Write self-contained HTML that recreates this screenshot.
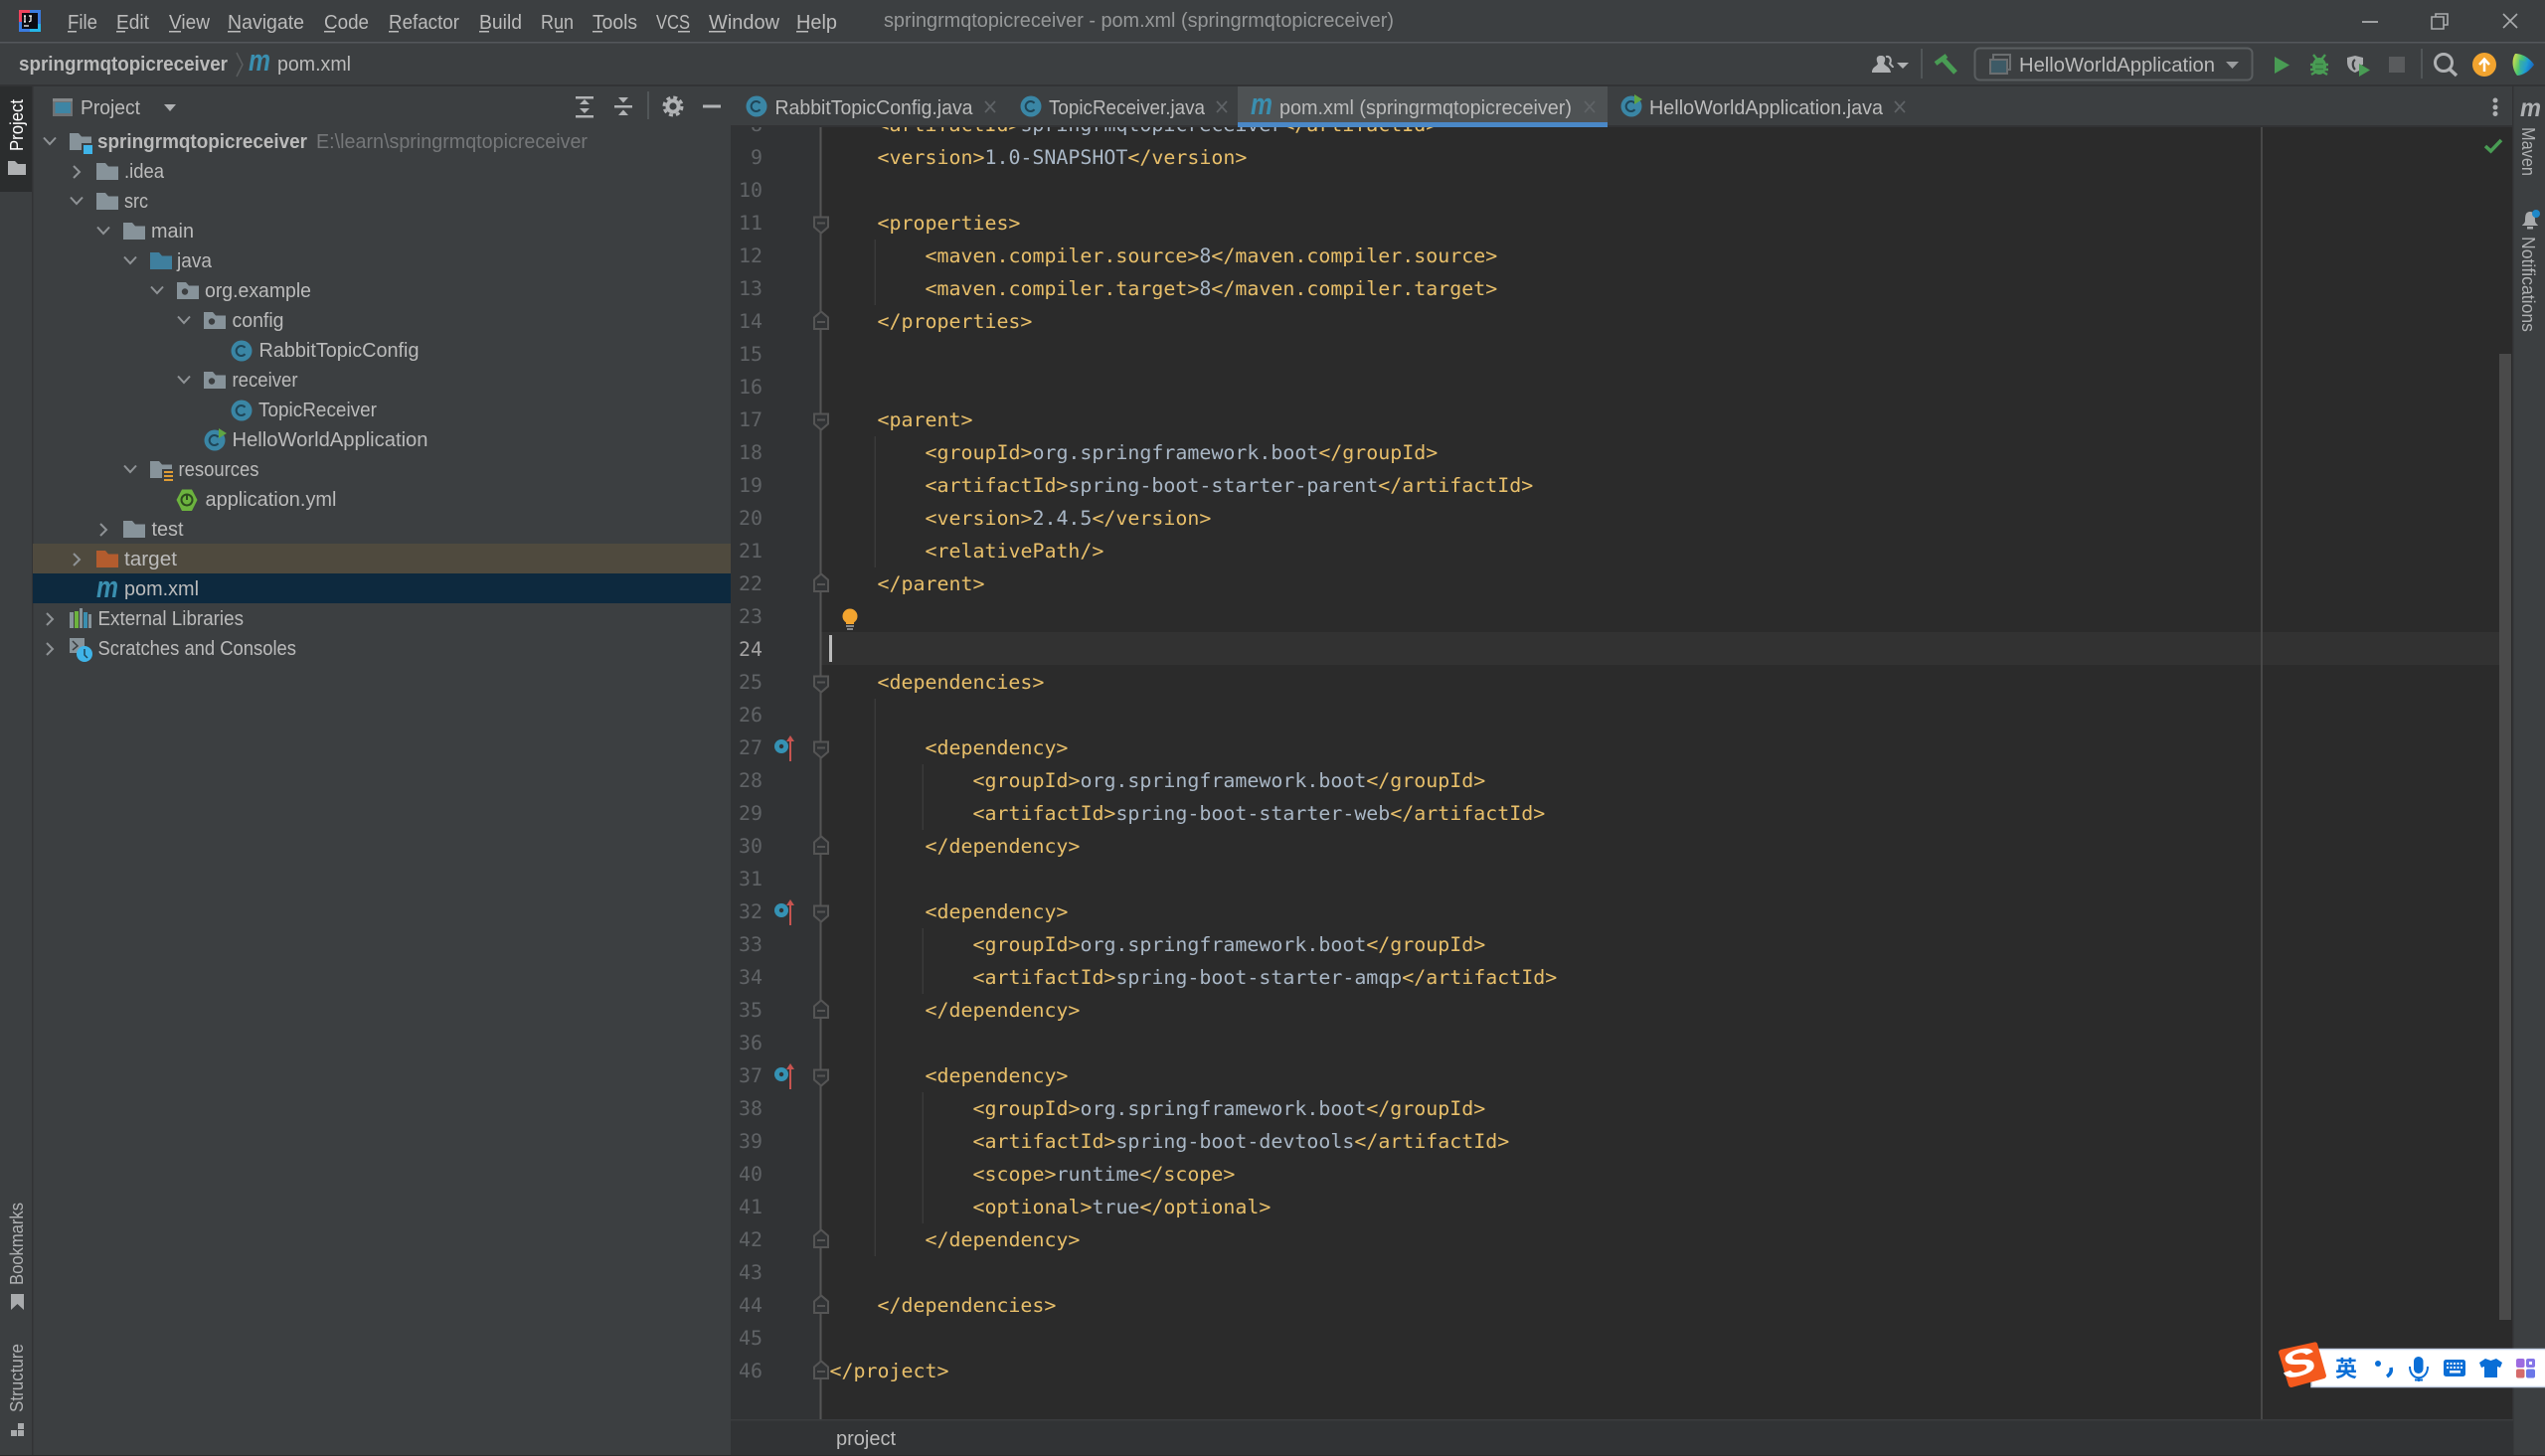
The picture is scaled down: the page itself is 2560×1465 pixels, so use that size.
<!DOCTYPE html>
<html><head><meta charset="utf-8"><title>pom.xml</title>
<style>
html,body{margin:0;padding:0;background:#3c3f41;overflow:hidden}
svg{display:block}
text{font-family:"Liberation Sans",sans-serif;font-size:20px;fill:#bbb}
.m{font-family:"DejaVu Sans Mono","Liberation Mono",monospace;font-size:19.93px;fill:#e8bf6a;white-space:pre}
.m tspan{fill:#a9b7c6}
.n{font-family:"DejaVu Sans Mono","Liberation Mono",monospace;font-size:19.93px;fill:#606366;text-anchor:end}
.ic{font-weight:bold;font-style:italic;font-size:31px;fill:#3a8fb0}
.x{stroke:#5f6366;stroke-width:1.8;fill:none}
.ch{stroke:#8f9396;stroke-width:2;fill:none}
</style></head>
<body>
<svg xmlns="http://www.w3.org/2000/svg" width="2560" height="1465" viewBox="0 0 2560 1465">
<defs>
<linearGradient id="tb" x1="0" y1="0" x2="1" y2="0.300"><stop offset="0" stop-color="#e9e24a"/><stop offset="0.450" stop-color="#4cc66f"/><stop offset="0.750" stop-color="#1d9ad6"/><stop offset="1" stop-color="#1a6fc4"/></linearGradient>
<symbol id="fold" viewBox="0 0 22 17" width="22" height="17" overflow="visible"><path d="M0 0H9L12 3.5H22V17H0Z" fill="#87939a"/></symbol>
<symbol id="jfold" viewBox="0 0 22 17" width="22" height="17" overflow="visible"><path d="M0 0H9L12 3.5H22V17H0Z" fill="#3f7f9e"/></symbol>
<symbol id="tfold" viewBox="0 0 22 17" width="22" height="17" overflow="visible"><path d="M0 0H9L12 3.5H22V17H0Z" fill="#b35c2e"/></symbol>
<symbol id="pfold" viewBox="0 0 22 17" width="22" height="17" overflow="visible"><path d="M0 0H9L12 3.5H22V17H0Z" fill="#87939a"/><circle cx="8" cy="9.5" r="3.2" fill="#3c3f41"/></symbol>
<symbol id="cls" viewBox="-11 -11 22 22" width="22" height="22" overflow="visible"><circle r="10.5" fill="#3a86a5"/><path d="M3.5 -3.2A5 5 0 1 0 3.5 3.2" fill="none" stroke="#1f4557" stroke-width="2"/></symbol>
<g id="fo"><path d="M-7 -6H7V4L0 10L-7 4Z" fill="#313335" stroke="#555" stroke-width="2"/><path d="M-4 0H4" stroke="#555" stroke-width="2"/></g>
<g id="fc"><path d="M-7 7.500H7V-4L0 -10L-7 -4Z" fill="#313335" stroke="#555" stroke-width="2"/><path d="M-4 0.500H4" stroke="#555" stroke-width="2"/></g>
<g id="mv"><circle cx="786" cy="0" r="7" fill="#3592b4"/><circle cx="786" cy="0" r="2.200" fill="#313335"/><path d="M795 -6V15" stroke="#c75450" stroke-width="2"/><path d="M791 -5L795 -11L799 -5Z" fill="#c75450"/></g>
</defs>

<rect width="2560" height="1465" fill="#3c3f41"/>
<!-- title bar -->
<rect y="42" width="2560" height="1.500" fill="#54575a"/>
<rect x="0" y="85" width="2560" height="2" fill="#323335"/>
<rect x="19" y="10" width="22" height="22" fill="#3a7be0"/>
<rect x="19" y="10" width="11" height="12" fill="#f0435c"/>
<rect x="30" y="24" width="11" height="8" fill="#25b6e8"/>
<rect x="22" y="13" width="16" height="16" fill="#0b0b12"/>
<path d="M24 16H26M25 16V22M24 22H26M29 16H32M31 16V21L29 22M24 26H29" stroke="#fff" stroke-width="1.200" fill="none"/>

<text x="68" y="29" textLength="30" lengthAdjust="spacingAndGlyphs">File</text>
<text x="117" y="29" textLength="33" lengthAdjust="spacingAndGlyphs">Edit</text>
<text x="170" y="29" textLength="41" lengthAdjust="spacingAndGlyphs">View</text>
<text x="229" y="29" textLength="77" lengthAdjust="spacingAndGlyphs">Navigate</text>
<text x="326" y="29" textLength="45" lengthAdjust="spacingAndGlyphs">Code</text>
<text x="391" y="29" textLength="71" lengthAdjust="spacingAndGlyphs">Refactor</text>
<text x="482" y="29" textLength="43" lengthAdjust="spacingAndGlyphs">Build</text>
<text x="544" y="29" textLength="33" lengthAdjust="spacingAndGlyphs">Run</text>
<text x="596" y="29" textLength="45" lengthAdjust="spacingAndGlyphs">Tools</text>
<text x="660" y="29" textLength="34" lengthAdjust="spacingAndGlyphs">VCS</text>
<text x="713" y="29" textLength="71" lengthAdjust="spacingAndGlyphs">Window</text>
<text x="801" y="29" textLength="41" lengthAdjust="spacingAndGlyphs">Help</text>
<g fill="#bbb"><rect x="68" y="31" width="9" height="1.500"/><rect x="117" y="31" width="9" height="1.500"/><rect x="170" y="31" width="12" height="1.500"/><rect x="229" y="31" width="13" height="1.500"/><rect x="326" y="31" width="11" height="1.500"/><rect x="391" y="31" width="10" height="1.500"/><rect x="482" y="31" width="10" height="1.500"/><rect x="559" y="31" width="8" height="1.500"/><rect x="596" y="31" width="10" height="1.500"/><rect x="682" y="31" width="12" height="1.500"/><rect x="713" y="31" width="17" height="1.500"/><rect x="801" y="31" width="12" height="1.500"/></g>

<text x="889" y="27" textLength="513" lengthAdjust="spacingAndGlyphs" style="fill:#969899">springrmqtopicreceiver - pom.xml (springrmqtopicreceiver)</text>
<path d="M2376 22H2392" stroke="#a9abad" stroke-width="1.800"/>
<path d="M2446 17H2458V29H2446ZM2450 17V14H2462V25H2458" fill="none" stroke="#a9abad" stroke-width="1.600"/>
<path d="M2518 14L2532 28M2532 14L2518 28" stroke="#a9abad" stroke-width="1.600"/>

<!-- nav bar -->
<text x="19" y="71" textLength="210" lengthAdjust="spacingAndGlyphs" style="font-weight:bold">springrmqtopicreceiver</text>
<path d="M238 53L244 65L238 77" fill="none" stroke="#5b5e60" stroke-width="1.500"/>
<text class="ic" x="250" y="71" textLength="22" lengthAdjust="spacingAndGlyphs">m</text>
<text x="279" y="71" textLength="74" lengthAdjust="spacingAndGlyphs">pom.xml</text>

<!-- toolbar icons -->
<path d="M1883 73C1883 67 1888 67 1889 64C1887 60 1887 56 1892 56C1897 56 1897 60 1895 64C1897 67 1901 67 1902 73Z" fill="#afb1b3"/>
<path d="M1897 57C1901 56 1903 60 1901 64C1902 66 1904 66 1904 68" fill="none" stroke="#afb1b3" stroke-width="2"/>
<path d="M1908 63H1920L1914 69Z" fill="#afb1b3"/>
<rect x="1932" y="49" width="2" height="30" fill="#515658"/>
<path d="M1947 64L1958 56" stroke="#499c54" stroke-width="4.500" fill="none"/>
<path d="M1954 59L1967 73" stroke="#499c54" stroke-width="5" fill="none"/>
<rect x="1986.500" y="48.500" width="279" height="32" rx="5" fill="#3c3f41" stroke="#5a5e60" stroke-width="2"/>
<path d="M2005 59V55H2022V70H2019" fill="none" stroke="#6b6e70" stroke-width="2"/>
<rect x="2002" y="60" width="17" height="14" fill="#3d5a66" stroke="#6b6e70" stroke-width="2"/>
<text x="2031" y="72" textLength="197" lengthAdjust="spacingAndGlyphs">HelloWorldApplication</text>
<path d="M2239 62H2252L2245.500 69Z" fill="#9a9c9e"/>
<path d="M2288 57L2303 65.500L2288 74Z" fill="#499c54"/>
<path d="M2327 55L2331 60M2339 55L2335 60M2324 65H2342M2324 70H2342M2325 75L2330 72M2341 75L2336 72" stroke="#499c54" stroke-width="2.400" fill="none"/>
<ellipse cx="2333" cy="66.500" rx="7" ry="8.500" fill="#499c54"/>
<path d="M2329 64.500H2337M2329 69.500H2337" stroke="#3a7a44" stroke-width="1.500"/>
<path d="M2361 58L2369 56L2377 58V65L2373 66V71L2369 73C2364 71 2361 68 2361 62Z" fill="#a9abad"/>
<path d="M2369 60C2366 62 2366 67 2369 70" fill="none" stroke="#3c3f41" stroke-width="2.200"/>
<path d="M2373 64L2384 70.500L2373 77Z" fill="#499c54"/>
<rect x="2403" y="57" width="16" height="16" fill="#595b5d"/>
<rect x="2435" y="49" width="2" height="30" fill="#515658"/>
<circle cx="2458" cy="63" r="8.500" fill="none" stroke="#afb1b3" stroke-width="3"/>
<path d="M2464 69.500L2471 76" stroke="#afb1b3" stroke-width="3.500"/>
<circle cx="2499" cy="65" r="12" fill="#f2a42f"/>
<path d="M2499 72V60M2494 65L2499 59.500L2504 65" fill="none" stroke="#fff" stroke-width="2.500"/>
<path d="M2530 54C2538 54 2545 59 2549 65C2545 71 2538 76 2532 76C2527 70 2526 60 2530 54Z" fill="url(#tb)"/>
<path d="M2534 60C2539 61 2542 63 2543 65C2541 68 2538 70 2535 71Z" fill="#2a9fd0" opacity=".55"/>

<!-- left stripe -->
<rect x="32" y="87" width="1.500" height="1378" fill="#323335"/>
<rect x="0" y="87" width="32" height="106" fill="#2b2d2e"/>
<text transform="translate(23,152) rotate(-90)" textLength="52" lengthAdjust="spacingAndGlyphs" style="font-size:18px;fill:#fff">Project</text>
<path d="M8 162H15L18 165H26V176H8Z" fill="#afb1b3"/>
<text transform="translate(23,1293) rotate(-90)" textLength="83" lengthAdjust="spacingAndGlyphs" style="font-size:18px;fill:#afb1b3">Bookmarks</text>
<path d="M11 1302H24V1318L17.500 1312L11 1318Z" fill="#a9abad"/>
<text transform="translate(23,1421) rotate(-90)" textLength="69" lengthAdjust="spacingAndGlyphs" style="font-size:18px;fill:#afb1b3">Structure</text>
<path d="M18 1432H24V1438H18ZM11 1439H17V1445H11ZM18 1439H24V1445H18Z" fill="#a9abad"/>

<!-- project panel header -->
<rect x="53" y="99" width="20" height="18" fill="#6e7275"/>
<rect x="53" y="99" width="20" height="3" fill="#85888a"/>
<rect x="55.500" y="103" width="15.500" height="11" fill="#3e85a4"/>
<text x="81" y="115" textLength="60" lengthAdjust="spacingAndGlyphs">Project</text>
<path d="M165 105H177L171 112Z" fill="#afb1b3"/>
<g fill="#b1b3b5"><rect x="579" y="97" width="18" height="2.500"/><rect x="579" y="116" width="18" height="2.500"/><path d="M583 105L588 100L593 105ZM583 109H593L588 114Z"/>
<rect x="618" y="106" width="18" height="2.500"/><path d="M622 98H632L627 103.500ZM622 116H632L627 110.500Z"/>
<circle cx="677" cy="107" r="7.500"/><circle cx="677" cy="107" r="9" fill="none" stroke="#b1b3b5" stroke-width="3" stroke-dasharray="4 3.070"/>
<rect x="707" y="105.500" width="18" height="3"/></g>
<circle cx="677" cy="107" r="3.600" fill="#3c3f41"/>
<rect x="651" y="92" width="2" height="28" fill="#515658"/>

<!-- tree highlights -->
<rect x="33" y="547" width="702" height="30" fill="#4f4a3e"/>
<rect x="33" y="577" width="702" height="30" fill="#0d293e"/>

<!-- chevrons -->
<path class="ch" d="M44 138.500L50 145L56 138.500"/>
<path class="ch" d="M74 167L80 173L74 179"/>
<path class="ch" d="M71 198.500L77 205L83 198.500"/>
<path class="ch" d="M98 228.500L104 235L110 228.500"/>
<path class="ch" d="M125 258.500L131 265L137 258.500"/>
<path class="ch" d="M152 288.500L158 295L164 288.500"/>
<path class="ch" d="M179 318.500L185 325L191 318.500"/>
<path class="ch" d="M179 378.500L185 385L191 378.500"/>
<path class="ch" d="M125 468.500L131 475L137 468.500"/>
<path class="ch" d="M101 527L107 533L101 539"/>
<path class="ch" d="M74 557L80 563L74 569"/>
<path class="ch" d="M47 617L53 623L47 629"/>
<path class="ch" d="M47 647L53 653L47 659"/>

<!-- tree icons -->
<use href="#fold" x="70" y="134"/><rect x="82" y="144" width="12" height="12" fill="#3c3f41"/><rect x="84" y="146" width="9" height="9" fill="#3fb4e8"/>
<use href="#fold" x="97" y="164"/>
<use href="#fold" x="97" y="194"/>
<use href="#fold" x="124" y="224"/>
<use href="#jfold" x="151" y="254"/>
<use href="#pfold" x="178" y="284"/>
<use href="#pfold" x="205" y="314"/>
<use href="#cls" x="232" y="342"/>
<use href="#pfold" x="205" y="374"/>
<use href="#cls" x="232" y="402"/>
<use href="#cls" x="205" y="432"/><path d="M220 431L228 436L220 441Z" fill="#5fa544"/>
<use href="#fold" x="151" y="464"/><rect x="163" y="472" width="12" height="15" fill="#3c3f41"/><path d="M165 475H174M165 479H174M165 483H174" stroke="#e09d35" stroke-width="2"/>
<path d="M183 492.500H193L198.500 503L193 514H183L177.500 503Z" fill="#6cb33e"/>
<circle cx="188" cy="503" r="5.500" fill="none" stroke="#2d4a1f" stroke-width="2"/><path d="M188 497V503" stroke="#2d4a1f" stroke-width="2"/>
<use href="#fold" x="124" y="524"/>
<use href="#tfold" x="97" y="554"/>
<text class="ic" x="97" y="601" textLength="22" lengthAdjust="spacingAndGlyphs">m</text>
<g><rect x="70" y="616" width="4" height="16" fill="#87939a"/><rect x="75" y="615" width="4" height="17" fill="#6db33f"/><rect x="80" y="612" width="3" height="20" fill="#87939a"/><rect x="84" y="616" width="4" height="16" fill="#3a8fb0"/><rect x="89" y="618" width="3" height="14" fill="#87939a"/></g>
<rect x="70" y="642" width="15" height="15" fill="#87939a"/><path d="M73 645L78 650L73 654" fill="none" stroke="#3c3f41" stroke-width="1.500"/>
<circle cx="85" cy="658" r="8" fill="#3fb4e8"/><path d="M85 653V659L88 662" fill="none" stroke="#1f4557" stroke-width="1.500"/>

<!-- tree text -->
<text x="98" y="149" textLength="211" lengthAdjust="spacingAndGlyphs" style="font-weight:bold">springrmqtopicreceiver</text>
<text x="318" y="149" textLength="273" lengthAdjust="spacingAndGlyphs" style="fill:#757779">E:\learn\springrmqtopicreceiver</text>
<text x="125" y="179" textLength="40" lengthAdjust="spacingAndGlyphs">.idea</text>
<text x="125" y="209" textLength="24" lengthAdjust="spacingAndGlyphs">src</text>
<text x="152" y="239" textLength="43" lengthAdjust="spacingAndGlyphs">main</text>
<text x="178" y="269" textLength="35" lengthAdjust="spacingAndGlyphs">java</text>
<text x="206" y="299" textLength="107" lengthAdjust="spacingAndGlyphs">org.example</text>
<text x="233.500" y="329" textLength="52" lengthAdjust="spacingAndGlyphs">config</text>
<text x="260.500" y="359" textLength="161" lengthAdjust="spacingAndGlyphs">RabbitTopicConfig</text>
<text x="233.500" y="389" textLength="66" lengthAdjust="spacingAndGlyphs">receiver</text>
<text x="260" y="419" textLength="119" lengthAdjust="spacingAndGlyphs">TopicReceiver</text>
<text x="233.500" y="449" textLength="197" lengthAdjust="spacingAndGlyphs">HelloWorldApplication</text>
<text x="179.500" y="479" textLength="81" lengthAdjust="spacingAndGlyphs">resources</text>
<text x="206.500" y="509" textLength="132" lengthAdjust="spacingAndGlyphs">application.yml</text>
<text x="152.500" y="539" textLength="32" lengthAdjust="spacingAndGlyphs">test</text>
<text x="125" y="569" textLength="53" lengthAdjust="spacingAndGlyphs">target</text>
<text x="125" y="599" textLength="75" lengthAdjust="spacingAndGlyphs">pom.xml</text>
<text x="98.500" y="629" textLength="146.500" lengthAdjust="spacingAndGlyphs">External Libraries</text>
<text x="98.500" y="659" textLength="199.500" lengthAdjust="spacingAndGlyphs">Scratches and Consoles</text>

<!-- editor -->
<rect x="735" y="87" width="1793" height="1378" fill="#2b2b2b"/>
<rect x="735" y="87" width="91" height="1341" fill="#313335"/>
<rect x="826" y="636" width="1688" height="33" fill="#323232"/>
<rect x="2274" y="128" width="2" height="1300" fill="#484848"/>
<g fill="#3a3a3a"><rect x="879.500" y="241" width="1.500" height="66"/><rect x="879.500" y="439" width="1.500" height="132"/><rect x="879.500" y="703" width="1.500" height="561"/><rect x="927.500" y="769" width="1.500" height="66"/><rect x="927.500" y="934" width="1.500" height="66"/><rect x="927.500" y="1099" width="1.500" height="132"/></g>
<rect x="824.500" y="128" width="2" height="1300" fill="#555"/>
<rect x="2514" y="356" width="12" height="972" fill="#4a4a4a"/>

<g>
<text class="n" x="767" y="132">8</text><text class="n" x="767" y="165">9</text><text class="n" x="767" y="198">10</text><text class="n" x="767" y="231">11</text><text class="n" x="767" y="264">12</text><text class="n" x="767" y="297">13</text><text class="n" x="767" y="330">14</text><text class="n" x="767" y="363">15</text><text class="n" x="767" y="396">16</text><text class="n" x="767" y="429">17</text><text class="n" x="767" y="462">18</text><text class="n" x="767" y="495">19</text><text class="n" x="767" y="528">20</text><text class="n" x="767" y="561">21</text><text class="n" x="767" y="594">22</text><text class="n" x="767" y="627">23</text><text class="n" x="767" y="660" style="fill:#a4a3a3">24</text><text class="n" x="767" y="693">25</text><text class="n" x="767" y="726">26</text><text class="n" x="767" y="759">27</text><text class="n" x="767" y="792">28</text><text class="n" x="767" y="825">29</text><text class="n" x="767" y="858">30</text><text class="n" x="767" y="891">31</text><text class="n" x="767" y="924">32</text><text class="n" x="767" y="957">33</text><text class="n" x="767" y="990">34</text><text class="n" x="767" y="1023">35</text><text class="n" x="767" y="1056">36</text><text class="n" x="767" y="1089">37</text><text class="n" x="767" y="1122">38</text><text class="n" x="767" y="1155">39</text><text class="n" x="767" y="1188">40</text><text class="n" x="767" y="1221">41</text><text class="n" x="767" y="1254">42</text><text class="n" x="767" y="1287">43</text><text class="n" x="767" y="1320">44</text><text class="n" x="767" y="1353">45</text><text class="n" x="767" y="1386">46</text>
</g>

<use href="#fo" x="826" y="224.500"/><use href="#fc" x="826" y="323.500"/><use href="#fo" x="826" y="422.500"/><use href="#fc" x="826" y="587.500"/><use href="#fo" x="826" y="686.500"/><use href="#fo" x="826" y="752.500"/><use href="#fc" x="826" y="851.500"/><use href="#fo" x="826" y="917.500"/><use href="#fc" x="826" y="1016.500"/><use href="#fo" x="826" y="1082.500"/><use href="#fc" x="826" y="1247.500"/><use href="#fc" x="826" y="1313.500"/><use href="#fc" x="826" y="1379.500"/>
<use href="#mv" y="751"/><use href="#mv" y="916"/><use href="#mv" y="1081"/>

<circle cx="855" cy="620" r="7.500" fill="#f2a42f"/><path d="M851 625H859V628H851Z" fill="#f2a42f"/><path d="M851 630H859M852 633H858" stroke="#a8a8a8" stroke-width="1.500"/>
<rect x="834" y="639" width="3" height="27" fill="#bbb"/>

<g xml:space="preserve">
<text class="m" x="882.500" y="132">&lt;artifactId&gt;<tspan>springrmqtopicreceiver</tspan>&lt;/artifactId&gt;</text>
<text class="m" x="882.500" y="165">&lt;version&gt;<tspan>1.0-SNAPSHOT</tspan>&lt;/version&gt;</text>
<text class="m" x="882.500" y="231">&lt;properties&gt;</text>
<text class="m" x="930.500" y="264">&lt;maven.compiler.source&gt;<tspan>8</tspan>&lt;/maven.compiler.source&gt;</text>
<text class="m" x="930.500" y="297">&lt;maven.compiler.target&gt;<tspan>8</tspan>&lt;/maven.compiler.target&gt;</text>
<text class="m" x="882.500" y="330">&lt;/properties&gt;</text>
<text class="m" x="882.500" y="429">&lt;parent&gt;</text>
<text class="m" x="930.500" y="462">&lt;groupId&gt;<tspan>org.springframework.boot</tspan>&lt;/groupId&gt;</text>
<text class="m" x="930.500" y="495">&lt;artifactId&gt;<tspan>spring-boot-starter-parent</tspan>&lt;/artifactId&gt;</text>
<text class="m" x="930.500" y="528">&lt;version&gt;<tspan>2.4.5</tspan>&lt;/version&gt;</text>
<text class="m" x="930.500" y="561">&lt;relativePath/&gt;</text>
<text class="m" x="882.500" y="594">&lt;/parent&gt;</text>
<text class="m" x="882.500" y="693">&lt;dependencies&gt;</text>
<text class="m" x="930.500" y="759">&lt;dependency&gt;</text>
<text class="m" x="978.500" y="792">&lt;groupId&gt;<tspan>org.springframework.boot</tspan>&lt;/groupId&gt;</text>
<text class="m" x="978.500" y="825">&lt;artifactId&gt;<tspan>spring-boot-starter-web</tspan>&lt;/artifactId&gt;</text>
<text class="m" x="930.500" y="858">&lt;/dependency&gt;</text>
<text class="m" x="930.500" y="924">&lt;dependency&gt;</text>
<text class="m" x="978.500" y="957">&lt;groupId&gt;<tspan>org.springframework.boot</tspan>&lt;/groupId&gt;</text>
<text class="m" x="978.500" y="990">&lt;artifactId&gt;<tspan>spring-boot-starter-amqp</tspan>&lt;/artifactId&gt;</text>
<text class="m" x="930.500" y="1023">&lt;/dependency&gt;</text>
<text class="m" x="930.500" y="1089">&lt;dependency&gt;</text>
<text class="m" x="978.500" y="1122">&lt;groupId&gt;<tspan>org.springframework.boot</tspan>&lt;/groupId&gt;</text>
<text class="m" x="978.500" y="1155">&lt;artifactId&gt;<tspan>spring-boot-devtools</tspan>&lt;/artifactId&gt;</text>
<text class="m" x="978.500" y="1188">&lt;scope&gt;<tspan>runtime</tspan>&lt;/scope&gt;</text>
<text class="m" x="978.500" y="1221">&lt;optional&gt;<tspan>true</tspan>&lt;/optional&gt;</text>
<text class="m" x="930.500" y="1254">&lt;/dependency&gt;</text>
<text class="m" x="882.500" y="1320">&lt;/dependencies&gt;</text>
<text class="m" x="834.500" y="1386">&lt;/project&gt;</text>
</g>

<path d="M2500 147L2505.500 152L2516 141" fill="none" stroke="#499c54" stroke-width="3.500"/>

<!-- tabs -->
<rect x="735" y="87" width="1793" height="39" fill="#3c3f41"/>
<rect x="735" y="126" width="1793" height="2" fill="#323335"/>
<rect x="1245" y="87" width="372" height="36" fill="#4e5254"/>
<rect x="1245" y="123" width="372" height="5" fill="#4a88c7"/>
<use href="#cls" x="750" y="96"/>
<text x="779.500" y="115" textLength="199" lengthAdjust="spacingAndGlyphs">RabbitTopicConfig.java</text>
<path class="x" d="M991 102L1001 113M1001 102L991 113"/>
<use href="#cls" x="1026" y="96"/>
<text x="1055" y="115" textLength="157" lengthAdjust="spacingAndGlyphs">TopicReceiver.java</text>
<path class="x" d="M1224 102L1234 113M1234 102L1224 113"/>
<text class="ic" x="1258" y="115" textLength="22" lengthAdjust="spacingAndGlyphs">m</text>
<text x="1287" y="115" textLength="294" lengthAdjust="spacingAndGlyphs">pom.xml (springrmqtopicreceiver)</text>
<path class="x" d="M1594 102L1604 113M1604 102L1594 113"/>
<use href="#cls" x="1630" y="96"/><path d="M1644 95L1652 100L1644 105Z" fill="#5fa544"/>
<text x="1659" y="115" textLength="235" lengthAdjust="spacingAndGlyphs">HelloWorldApplication.java</text>
<path class="x" d="M1906 102L1916 113M1916 102L1906 113"/>
<g fill="#afb1b3"><circle cx="2510" cy="101" r="2.500"/><circle cx="2510" cy="108" r="2.500"/><circle cx="2510" cy="114.500" r="2.500"/></g>

<!-- right stripe -->
<rect x="2528" y="87" width="32" height="1378" fill="#3c3f41"/>
<rect x="2527" y="87" width="1.500" height="1378" fill="#323335"/>
<text x="2535" y="117" style="font-size:25px;font-weight:bold;font-style:italic;fill:#aeb0b2" textLength="21" lengthAdjust="spacingAndGlyphs">m</text>
<text transform="translate(2537,128) rotate(90)" textLength="49" lengthAdjust="spacingAndGlyphs" style="font-size:18px;fill:#afb1b3">Maven</text>
<path d="M2545 213C2540 213 2540 218 2540 222C2540 225 2537 226 2537 227H2553C2553 226 2550 225 2550 222C2550 218 2550 213 2545 213Z" fill="#a9abad"/>
<rect x="2542" y="228" width="6" height="2.500" fill="#a9abad"/>
<circle cx="2551" cy="215" r="4" fill="#1e88c9"/>
<text transform="translate(2537,238) rotate(90)" textLength="96" lengthAdjust="spacingAndGlyphs" style="font-size:18px;fill:#afb1b3">Notifications</text>

<!-- breadcrumb -->
<rect x="735" y="1428" width="1793" height="37" fill="#313335"/>
<rect x="735" y="1428" width="1793" height="1.500" fill="#3a3c3e"/>
<text x="841" y="1454" textLength="60" lengthAdjust="spacingAndGlyphs">project</text>
<rect y="1464" width="2560" height="1" fill="#2b2b2b"/>

<!-- sogou IME -->
<rect x="2325" y="1357.500" width="236" height="38" fill="#fff" stroke="#c5d2e6" stroke-width="1.500"/>
<path d="M2294 1358L2328 1350.500Q2330 1350 2331 1352L2340 1384Q2340 1386 2338 1387L2305 1396Q2303 1396 2302 1394L2292 1361Q2292 1359 2294 1358Z" fill="#f4591d"/>
<text transform="translate(2298,1388) rotate(-14) scale(1.200,0.850)" style="font-size:44px;font-weight:bold;font-style:italic;fill:#fff">S</text>
<text x="2349" y="1385" style="font-family:'Noto Sans CJK SC',sans-serif;font-size:22px;font-weight:bold;fill:#0a6ed6">英</text>
<circle cx="2392" cy="1372" r="3" fill="#0a6ed6"/>
<path d="M2405 1376C2406 1380 2404 1383 2401 1385" stroke="#0a6ed6" stroke-width="3.500" fill="none"/>
<rect x="2428" y="1365" width="9.500" height="17" rx="4.700" fill="#0a6ed6"/>
<path d="M2424 1375C2424 1390 2442 1390 2442 1375M2433 1386V1390M2429 1388.500H2437" fill="none" stroke="#0a6ed6" stroke-width="2"/>
<rect x="2458" y="1368" width="22" height="17" rx="2.500" fill="#0a6ed6"/>
<path d="M2461 1372H2477M2461 1376H2477" stroke="#fff" stroke-width="2" stroke-dasharray="2 1.500"/><rect x="2464" y="1379" width="11" height="2.500" fill="#fff"/>
<path d="M2500 1367L2505.500 1369L2511 1367L2517 1371L2515 1376L2512 1375V1386H2499V1375L2496 1376L2494 1371Z" fill="#0a6ed6"/>
<rect x="2531" y="1367" width="8.500" height="9" rx="2" fill="#9d6be0"/><rect x="2541" y="1367" width="9" height="9" rx="2" fill="#8575e8"/><rect x="2531" y="1377.500" width="8.500" height="9" rx="2" fill="#d56b6b"/><rect x="2541" y="1377.500" width="9" height="9" rx="2" fill="#6b77e8"/><rect x="2544" y="1370" width="3" height="3" fill="#fff"/>
</svg>
</body></html>
